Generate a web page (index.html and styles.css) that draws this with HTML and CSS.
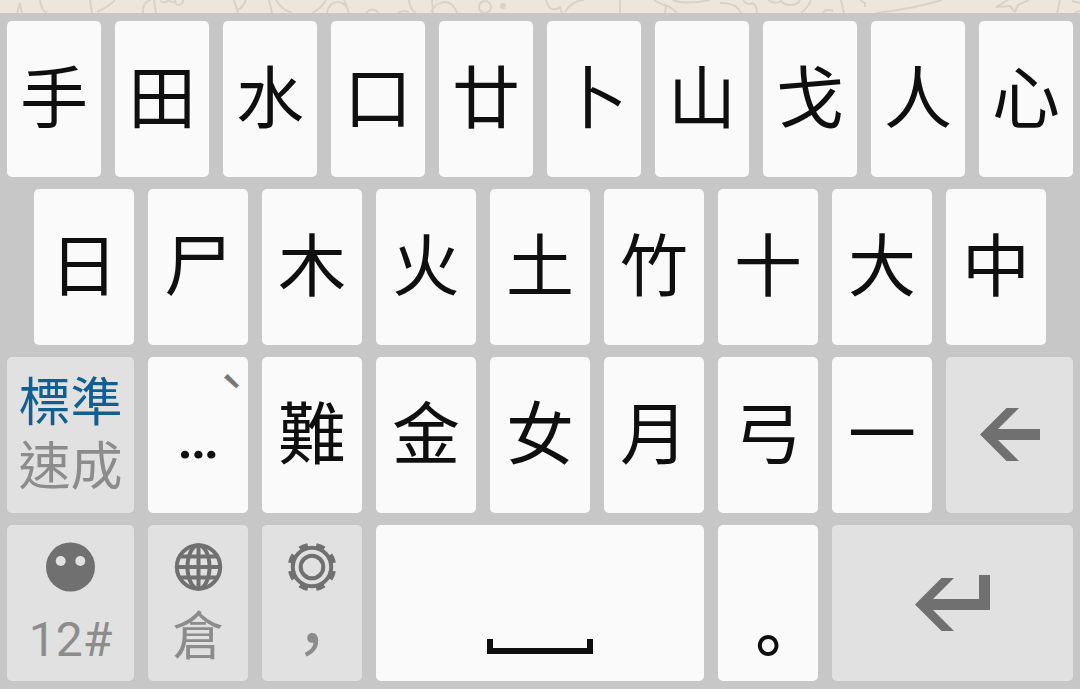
FILE: index.html
```
<!DOCTYPE html>
<html lang="zh-Hant">
<head>
    <meta charset="UTF-8">
    <title>倉頡鍵盤</title>
    <link rel="stylesheet" href="styles.css">
</head>
<body>
    <div class="chat">
        <svg width="1080" height="13" viewBox="0 0 1080 13" fill="none" stroke="#dad2c9" stroke-width="2">
            <path d="M17 13 L20 3 L22 13 M40 0 Q41 10 47 13 M90 0 L92 13 M115 0 Q108 7 97 12 M143 13 Q142 2 151 0 M154 0 L156 13"/>
            <path d="M160 1 Q165 4 169 0 Q172 4 176 1"/>
            <circle cx="179" cy="1" r="4"/>
            <path d="M234 0 L238 13 M246 0 Q243 7 238 10 M269 0 L272 13 M276 0 Q282 10 292 13 M312 13 Q320 10 326 0"/>
            <path d="M327 13 Q329 2 338 2 Q346 2 349 13 M344 0 L347 6 M366 13 Q372 6 379 13 M398 13 Q403 10 409 12"/>
            <path d="M409 0 Q410 10 416 13 M432 0 L433 13 M431 12 Q436 2 445 2 Q453 2 457 13"/>
            <circle cx="485" cy="7" r="6"/>
            <circle cx="503" cy="6" r="2" fill="#dad2c9"/>
            <path d="M546 0 Q549 9 552 9 Q557 10 560 7 L562 13 M565 12 Q571 1 584 0 M620 0 L620 13"/>
            <path d="M654 0 Q662 5 670 7 L677 13 M665 13 L666 5 M673 0 Q685 5 710 0 M720 3 Q736 2 741 13 M743 0 Q747 6 752 3 Q757 5 757 13"/>
            <path d="M768 0 Q775 5 781 1 Q787 8 798 3 L800 0 M811 0 Q808 8 801 13 M823 13 Q825 8 833 11 M841 0 L844 13 M860 0 L865 3 L865 7"/>
            <path d="M876 13 Q912 9 942 0 M1008 0 L996 7 L1010 6 L1015 12 L1018 5 L1029 0 M1060 0 L1057 13 M1072 1 L1080 3 M1074 13 L1080 11"/>
        </svg>
    </div>
    <div class="keyboard">
        <div class="row">
            <button class="key">手</button>
            <button class="key">田</button>
            <button class="key">水</button>
            <button class="key">口</button>
            <button class="key">廿</button>
            <button class="key">卜</button>
            <button class="key">山</button>
            <button class="key">戈</button>
            <button class="key">人</button>
            <button class="key">心</button>
        </div>
        <div class="row inset">
            <button class="key">日</button>
            <button class="key">尸</button>
            <button class="key">木</button>
            <button class="key">火</button>
            <button class="key">土</button>
            <button class="key">竹</button>
            <button class="key">十</button>
            <button class="key">大</button>
            <button class="key">中</button>
        </div>
        <div class="row">
            <button class="key fn side mode"><span class="label on">標準</span><span class="label">速成</span></button>
            <button class="key dots">…<span class="hint">ˋ</span></button>
            <button class="key">難</button>
            <button class="key">金</button>
            <button class="key">女</button>
            <button class="key">月</button>
            <button class="key">弓</button>
            <button class="key">一</button>
            <button class="key fn side" aria-label="Backspace">
                <svg width="60" height="53" viewBox="0 0 60 53"><path d="M0 26.500L26.500 0H39L18 21H60V32H18L39 53H26.500Z"/></svg>
            </button>
        </div>
        <div class="row">
            <button class="key fn side stack">
                <svg width="50" height="50" viewBox="0 0 50 50">
                    <circle cx="24.500" cy="25" r="24.500"/>
                    <circle class="eye" cx="14.700" cy="19" r="5"/>
                    <circle class="eye" cx="34.300" cy="19" r="5"/>
                </svg>
                <span class="label low num">12#</span>
            </button>
            <button class="key fn stack">
                <svg class="line" width="50" height="50" viewBox="0 0 50 50">
                    <circle cx="25.500" cy="25" r="21.700"/>
                    <ellipse cx="25.500" cy="25" rx="11" ry="21.700"/>
                    <path d="M25.500 3V47M4 25H47M7 14.500H44M7 35.500H44"/>
                </svg>
                <span class="label">倉</span>
            </button>
            <button class="key fn stack">
                <svg class="line" width="50" height="50" viewBox="0 0 50 50">
                    <circle cx="25" cy="25" r="19.200"/>
                    <circle cx="25" cy="25" r="11.300"/>
                    <circle class="teeth" cx="25" cy="25" r="22.300" pathLength="80"/>
                </svg>
                <span class="label low comma">，</span>
            </button>
            <button class="key space stack" aria-label="Space">
                <svg width="106" height="15" viewBox="0 0 106 15"><path d="M0 0H6V9H100V0H106V15H0Z"/></svg>
            </button>
            <button class="key stop stack"><span class="label">。</span></button>
            <button class="key fn enter" aria-label="Enter">
                <svg width="75" height="56" viewBox="0 0 75 56"><path d="M0 29.500L26.500 3H39L18 24H64V0H75V35H18L39 56H26.500Z"/></svg>
            </button>
        </div>
    </div>
</body>
</html>
```
FILE: styles.css
```
* {
    box-sizing: border-box;
    margin: 0;
    padding: 0;
}
body {
    background: #c7c7c7;
}
.chat {
    height: 13px;
    overflow: hidden;
    background: #eee6dd;
}
.chat svg {
    display: block;
    width: 100%;
}
.keyboard {
    display: flex;
    flex-direction: column;
    gap: 12px;
    padding: 8px 7px;
    font-family: "Noto Sans CJK TC", sans-serif;
}
.row {
    display: flex;
    gap: 14px;
}
.row.inset {
    padding: 0 27px;
}
.key {
    position: relative;
    display: flex;
    flex: 100 1 0;
    align-items: center;
    justify-content: center;
    min-width: 0;
    height: 156px;
    padding-bottom: 11px;
    border: none;
    border-radius: 5px;
    background: #fafafa;
    color: #0f0f0f;
    font-family: inherit;
    font-size: 68px;
    line-height: 80px;
    cursor: pointer;
}
.key svg {
    display: block;
    fill: #0f0f0f;
}
.key.fn {
    padding-bottom: 1px;
    background: #e1e1e1;
    color: #8c8c8c;
}
.key.fn svg {
    fill: #707070;
}
.key.side {
    flex-grow: 127;
}
.key.space {
    flex-grow: 328;
}
.key.enter {
    flex-grow: 241;
}

/* two line keys */
.key.mode {
    flex-direction: column;
    padding-bottom: 8px;
}
.key.stack {
    flex-direction: column;
    justify-content: flex-end;
    gap: 9px;
}
.key.fn.stack {
    padding-bottom: 16px;
}
.label {
    font-size: 52px;
    line-height: 64px;
}
.label.on {
    color: #115f91;
}
.label.low {
    padding-top: 14px;
    line-height: 50px;
}
.label.num {
    font-family: Roboto, sans-serif;
    font-size: 48px;
}
.label.comma {
    font-size: 68px;
}
.key.fn .eye {
    fill: #e1e1e1;
}
.key.fn svg.line {
    fill: none;
    stroke: #707070;
    stroke-width: 4px;
}
.line .teeth {
    stroke-dasharray: 5 5;
    stroke-dashoffset: -2.5;
}
.key.space {
    padding-bottom: 27px;
}
.key.stop {
    padding-bottom: 8px;
    font-weight: 500;
}
.key.stop .label {
    font-size: 66px;
}
.key.dots {
    padding-top: 16px;
    font-family: Roboto, "Noto Sans CJK TC", sans-serif;
    font-size: 60px;
    font-weight: 500;
}
.hint {
    position: absolute;
    top: 8px;
    right: 6px;
    color: #777;
    font-family: "Noto Sans CJK TC", sans-serif;
    font-size: 36px;
    font-weight: 700;
    line-height: 48px;
}
```
